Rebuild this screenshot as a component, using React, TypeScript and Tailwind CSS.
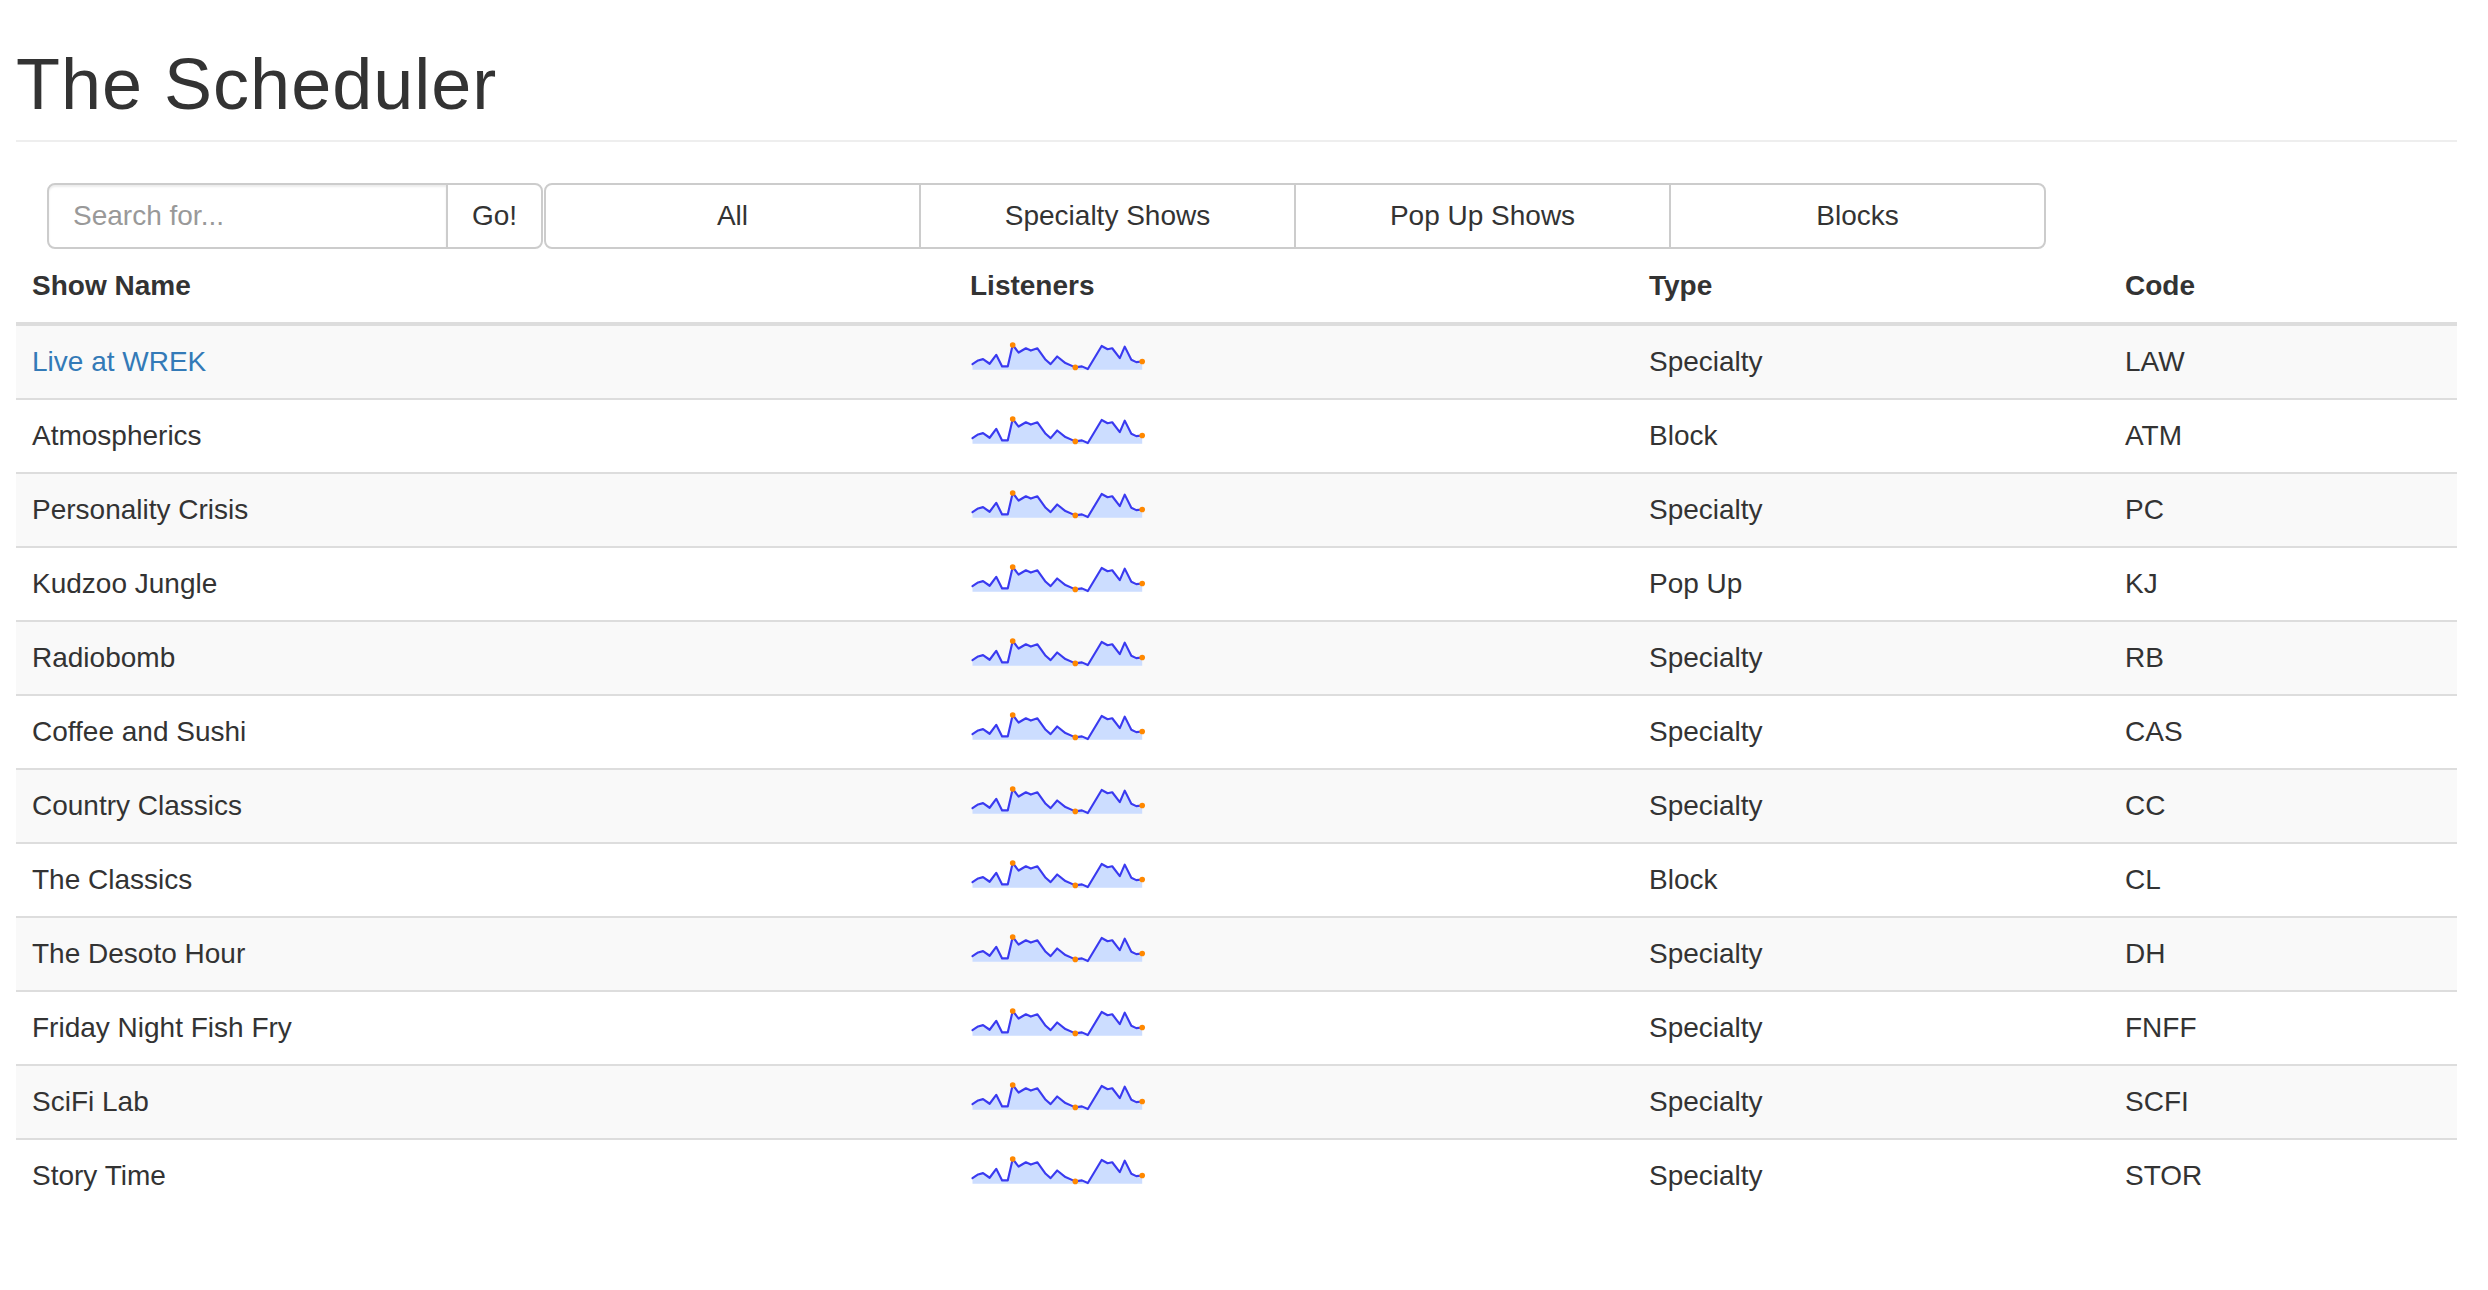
import React from 'react';

type Show = {
    name: string;
    type: string;
    code: string;
    link?: boolean;
};

const shows: Show[] = [
    { name: 'Live at WREK', type: 'Specialty', code: 'LAW', link: true },
    { name: 'Atmospherics', type: 'Block', code: 'ATM' },
    { name: 'Personality Crisis', type: 'Specialty', code: 'PC' },
    { name: 'Kudzoo Jungle', type: 'Pop Up', code: 'KJ' },
    { name: 'Radiobomb', type: 'Specialty', code: 'RB' },
    { name: 'Coffee and Sushi', type: 'Specialty', code: 'CAS' },
    { name: 'Country Classics', type: 'Specialty', code: 'CC' },
    { name: 'The Classics', type: 'Block', code: 'CL' },
    { name: 'The Desoto Hour', type: 'Specialty', code: 'DH' },
    { name: 'Friday Night Fish Fry', type: 'Specialty', code: 'FNFF' },
    { name: 'SciFi Lab', type: 'Specialty', code: 'SCFI' },
    { name: 'Story Time', type: 'Specialty', code: 'STOR' },
];

const filters = ['All', 'Specialty Shows', 'Pop Up Shows', 'Blocks'];

const points: [number, number][] = [
    [38, 103], [55, 92], [70, 88], [90, 102], [110, 75], [128, 110], [145, 110],
    [160, 45], [178, 68], [200, 55], [215, 62], [235, 55], [260, 90], [275, 103],
    [295, 80], [320, 100], [350, 113], [370, 110], [388, 118], [430, 48], [448, 58],
    [462, 55], [485, 85], [500, 50], [520, 90], [535, 97], [553, 95],
];

function Sparkline() {
    const line = points.map((p) => p.join(',')).join(' ');
    const area = `38,120 ${line} 553,120`;
    return (
        <svg viewBox="34 36 530 88" className="inline-block w-[177px] h-[29px] align-baseline">
            <polygon points={area} fill="#ccddff" />
            <polyline
                points={line}
                fill="none"
                stroke="#3a3af0"
                strokeWidth={6.5}
                strokeLinejoin="round"
                strokeLinecap="round"
            />
            <circle cx={160} cy={45} r={8.5} fill="#ff8800" />
            <circle cx={350} cy={113} r={8.5} fill="#ff8800" />
            <circle cx={553} cy={95} r={8.5} fill="#ff8800" />
        </svg>
    );
}

export default function App() {
    return (
        <div className="min-h-screen bg-white font-['Liberation_Sans',Arial,sans-serif] text-[#333]">
            <div className="ml-[16px] w-[2441px]">
                {/* Page header */}
                <h1 className="mt-[45px] pb-[16px] border-b-2 border-[#eee] text-[72px] leading-[79px] font-normal tracking-[1px]">
                    The Scheduler
                </h1>

                {/* Search + filters */}
                <div className="mt-[41px] ml-[31px] flex h-[66px]">
                    <div className="flex h-full">
                        <input
                            placeholder="Search for..."
                            className="h-full w-[401px] rounded-l-[8px] border-2 border-[#ccc] bg-white px-[24px] text-[28px] text-[#555] outline-none placeholder:text-[#999] shadow-[inset_0_2px_2px_rgba(0,0,0,0.075)]"
                        />
                        <button className="-ml-[2px] flex h-full w-[97px] items-center justify-center rounded-r-[8px] border-2 border-[#ccc] bg-white text-[28px] text-[#333]">
                            Go!
                        </button>
                    </div>
                    <div className="ml-[1px] flex h-full">
                        {filters.map((f, i) => (
                            <button
                                key={f}
                                className={
                                    'flex h-full w-[377px] items-center justify-center border-2 border-[#ccc] bg-white text-[28px] text-[#333] ' +
                                    (i === 0 ? 'rounded-l-[8px] ' : '-ml-[2px] ') +
                                    (i === filters.length - 1 ? 'rounded-r-[8px]' : '')
                                }
                            >
                                {f}
                            </button>
                        ))}
                    </div>
                </div>

                {/* Shows table */}
                <table className="mt-[1px] w-full table-fixed border-separate border-spacing-0 text-[28px] leading-[40px]">
                    <colgroup>
                        <col className="w-[938px]" />
                        <col className="w-[679px]" />
                        <col className="w-[476px]" />
                        <col />
                    </colgroup>
                    <thead>
                        <tr>
                            {['Show Name', 'Listeners', 'Type', 'Code'].map((h) => (
                                <th
                                    key={h}
                                    className="border-b-4 border-[#ddd] p-[16px] text-left font-bold"
                                >
                                    {h}
                                </th>
                            ))}
                        </tr>
                    </thead>
                    <tbody>
                        {shows.map((s, i) => {
                            const cell =
                                'p-[16px] ' + (i > 0 ? 'border-t-2 border-[#ddd] ' : '');
                            return (
                                <tr key={s.code} className={i % 2 === 0 ? 'bg-[#f9f9f9]' : 'bg-white'}>
                                    <td className={cell}>
                                        {s.link ? (
                                            <a href="#" className="text-[#337ab7]">
                                                {s.name}
                                            </a>
                                        ) : (
                                            s.name
                                        )}
                                    </td>
                                    <td className={cell}>
                                        <Sparkline />
                                    </td>
                                    <td className={cell}>{s.type}</td>
                                    <td className={cell}>{s.code}</td>
                                </tr>
                            );
                        })}
                    </tbody>
                </table>
            </div>
        </div>
    );
}
